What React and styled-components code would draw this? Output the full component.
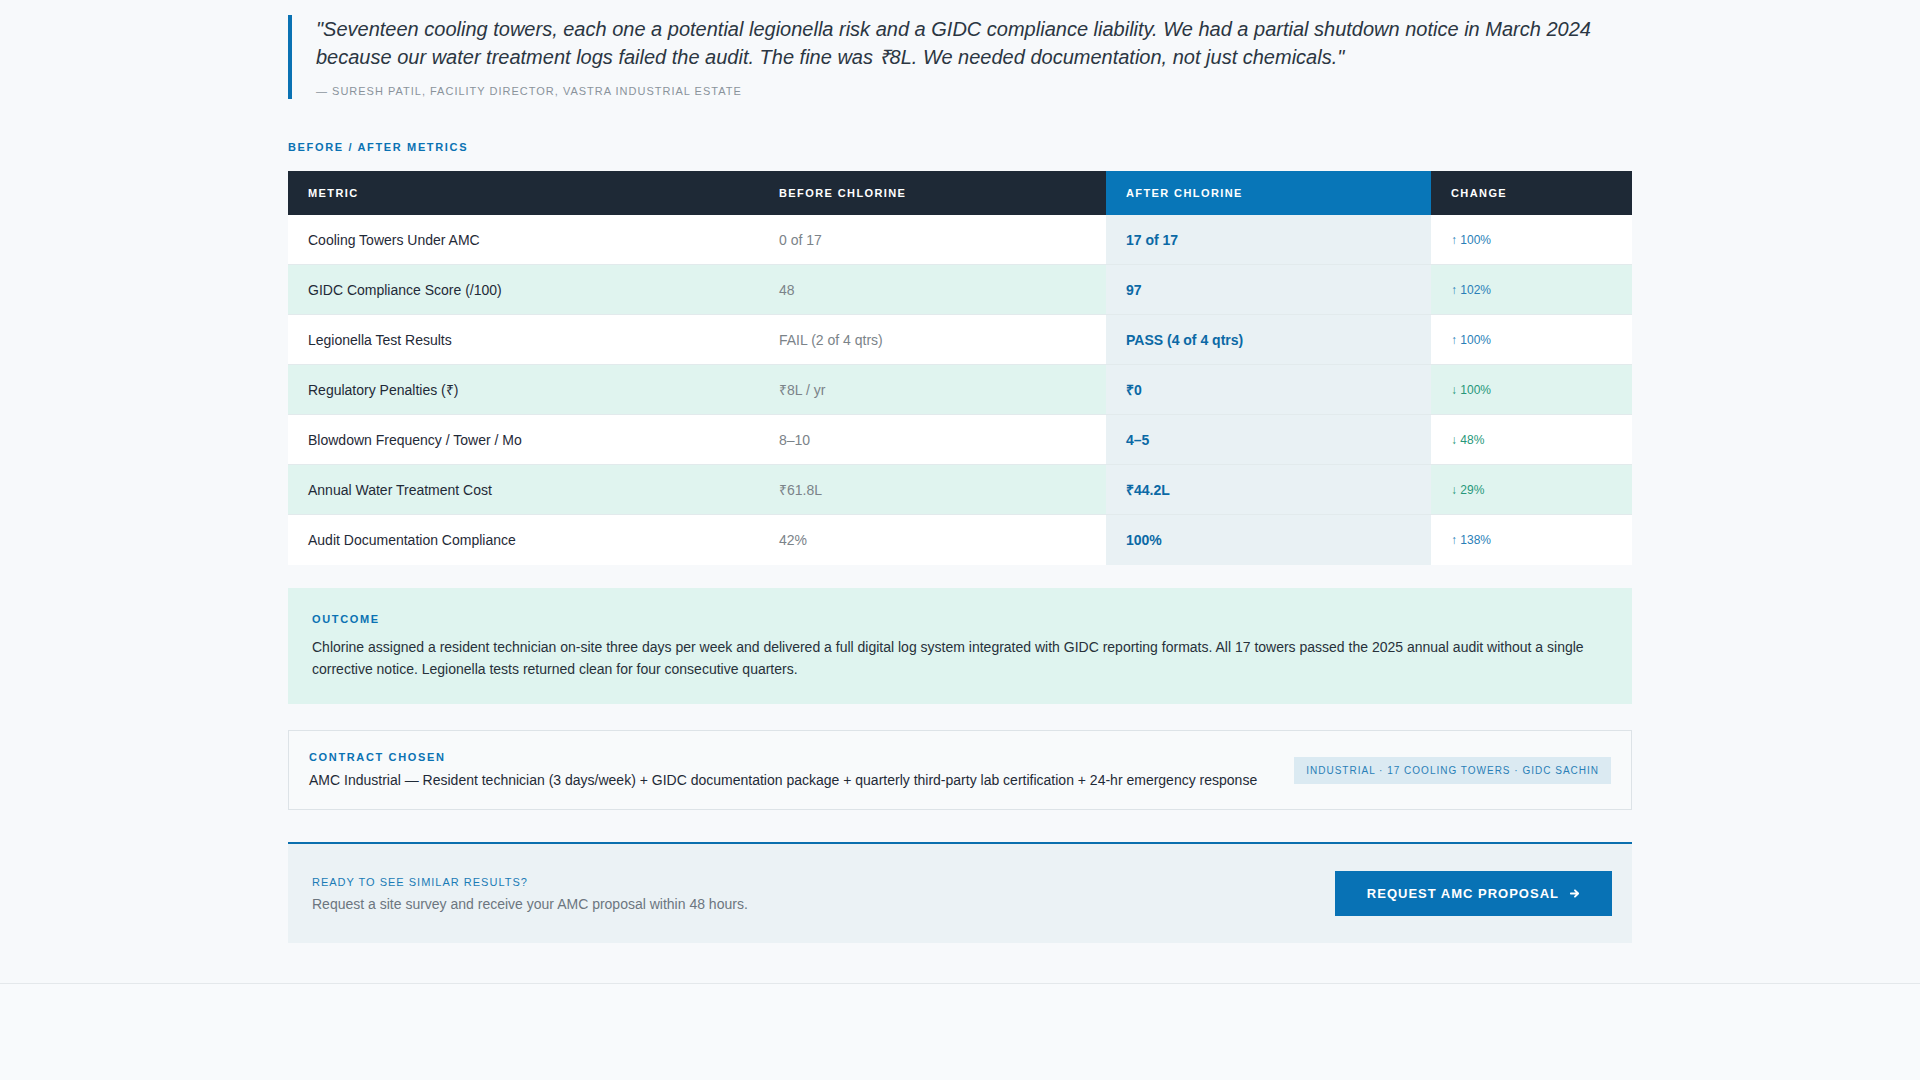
import React from "react";
import styled, { createGlobalStyle } from "styled-components";

const GlobalStyle = createGlobalStyle`
  html, body { margin: 0; padding: 0; }
  body {
    background: #f7f9fb;
    font-family: "Liberation Sans", Arial, sans-serif;
    color: #1f2a37;
  }
  * { box-sizing: border-box; }
`;

const Page = styled.div`
  min-height: 100vh;
  background: #f7f9fb;
  display: flex;
  flex-direction: column;
`;

const Main = styled.main`
  width: 1344px;
  margin: 0 auto;
  padding: 15px 0 40px;
`;

const Quote = styled.blockquote`
  margin: 0;
  border-left: 4px solid #0a72b3;
  padding-left: 24px;
`;

const QuoteText = styled.p`
  margin: 0;
  font-size: 20px;
  line-height: 28px;
  font-style: italic;
  color: #2b3642;
`;

const Attribution = styled.div`
  margin-top: 12px;
  font-size: 11px;
  line-height: 16px;
  letter-spacing: 1px;
  text-transform: uppercase;
  color: #8a939b;
`;

const SectionLabel = styled.div`
  margin: 40px 0 16px;
  font-size: 11px;
  line-height: 16px;
  font-weight: 700;
  letter-spacing: 0.15em;
  text-transform: uppercase;
  color: #0a72b3;
`;

const Table = styled.div`
  display: flex;
  flex-direction: column;
  background: #ffffff;
`;

const cols = "471px 347px 325px 1fr";

const HeadRow = styled.div`
  display: grid;
  grid-template-columns: ${cols};
  height: 44px;
  background: #1e2936;
`;

const HeadCell = styled.div`
  display: flex;
  align-items: center;
  padding: 0 20px;
  font-size: 11px;
  font-weight: 700;
  letter-spacing: 1.4px;
  text-transform: uppercase;
  color: #ffffff;
  background: ${(p) => (p.$highlight ? "#0876b8" : "transparent")};
`;

const Row = styled.div`
  display: grid;
  grid-template-columns: ${cols};
  height: 50px;
  background: ${(p) => (p.$alt ? "#e0f4ef" : "#ffffff")};
  border-bottom: ${(p) => (p.$last ? "none" : "1px solid #e2eaec")};
`;

const Cell = styled.div`
  display: flex;
  align-items: center;
  padding: 0 20px;
  font-size: 14px;
  color: #1f2a37;
`;

const BeforeCell = styled(Cell)`
  color: #7b8389;
`;

const AfterCell = styled(Cell)`
  background: #e9f1f4;
  color: #0b69a5;
  font-weight: 700;
`;

const ChangeCell = styled(Cell)`
  font-size: 12px;
  color: ${(p) => (p.$down ? "#27977a" : "#2a7fb7")};
`;

const Outcome = styled.section`
  margin-top: 23px;
  background: #dff4ef;
  padding: 24px;
`;

const BoxLabel = styled.div`
  font-size: 11px;
  line-height: 14px;
  font-weight: 700;
  letter-spacing: 0.15em;
  text-transform: uppercase;
  color: #0a72b3;
  margin-bottom: ${(p) => p.$gap || 0}px;
`;

const OutcomeText = styled.p`
  margin: 0;
  font-size: 14px;
  line-height: 22px;
  color: #27313a;
`;

const Contract = styled.section`
  margin-top: 26px;
  border: 1px solid #dde3e7;
  background: #f8fafb;
  padding: 19px 20px;
  display: flex;
  align-items: center;
  justify-content: space-between;
  gap: 24px;
`;

const ContractText = styled.div`
  font-size: 14px;
  line-height: 20px;
  color: #1f2a37;
`;

const Badge = styled.span`
  flex-shrink: 0;
  background: #dbeaf2;
  color: #2a7fb7;
  font-size: 10px;
  line-height: 15px;
  letter-spacing: 1px;
  text-transform: uppercase;
  padding: 6px 12px;
`;

const Cta = styled.section`
  margin-top: 32px;
  border-top: 2px solid #0a6fae;
  background: #ebf2f5;
  padding: 27px 20px 27px 24px;
  display: flex;
  align-items: center;
  justify-content: space-between;
`;

const CtaLabel = styled.div`
  font-size: 11px;
  line-height: 16px;
  letter-spacing: 1px;
  text-transform: uppercase;
  color: #1a7bb6;
  margin-bottom: 4px;
`;

const CtaText = styled.div`
  font-size: 14px;
  line-height: 20px;
  color: #6c767f;
`;

const Button = styled.button`
  border: none;
  background: #0872b5;
  color: #ffffff;
  font-family: "Liberation Sans", Arial, sans-serif;
  font-size: 13px;
  line-height: 15px;
  font-weight: 700;
  letter-spacing: 1px;
  text-transform: uppercase;
  padding: 15px 32px;
  display: inline-flex;
  align-items: center;
  gap: 10px;
  cursor: pointer;
`;

const Footer = styled.footer`
  flex: 1;
  border-top: 1px solid #e4e8eb;
  background: #f8fafc;
`;

const rows = [
  ["Cooling Towers Under AMC", "0 of 17", "17 of 17", "↑ 100%", false],
  ["GIDC Compliance Score (/100)", "48", "97", "↑ 102%", false],
  ["Legionella Test Results", "FAIL (2 of 4 qtrs)", "PASS (4 of 4 qtrs)", "↑ 100%", false],
  ["Regulatory Penalties (₹)", "₹8L / yr", "₹0", "↓ 100%", true],
  ["Blowdown Frequency / Tower / Mo", "8–10", "4–5", "↓ 48%", true],
  ["Annual Water Treatment Cost", "₹61.8L", "₹44.2L", "↓ 29%", true],
  ["Audit Documentation Compliance", "42%", "100%", "↑ 138%", false],
];

const Arrow = () => (
  <svg width="11" height="11" viewBox="0 0 12 12" fill="none" stroke="currentColor" strokeWidth="2" strokeLinecap="round" strokeLinejoin="round">
    <path d="M2 6h8M6.5 2.5L10 6l-3.5 3.5" />
  </svg>
);

export default function App() {
  return (
    <Page>
      <GlobalStyle />
      <Main>
        <Quote>
          <QuoteText>
            "Seventeen cooling towers, each one a potential legionella risk and a GIDC compliance liability. We had a partial shutdown notice in March 2024 because our water treatment logs failed the audit. The fine was ₹8L. We needed documentation, not just chemicals."
          </QuoteText>
          <Attribution>— Suresh Patil, Facility Director, Vastra Industrial Estate</Attribution>
        </Quote>

        <SectionLabel>Before / After Metrics</SectionLabel>
        <Table>
          <HeadRow>
            <HeadCell>Metric</HeadCell>
            <HeadCell>Before Chlorine</HeadCell>
            <HeadCell $highlight>After Chlorine</HeadCell>
            <HeadCell>Change</HeadCell>
          </HeadRow>
          {rows.map(([metric, before, after, change, down], i) => (
            <Row key={metric} $alt={i % 2 === 1} $last={i === rows.length - 1}>
              <Cell>{metric}</Cell>
              <BeforeCell>{before}</BeforeCell>
              <AfterCell>{after}</AfterCell>
              <ChangeCell $down={down}>{change}</ChangeCell>
            </Row>
          ))}
        </Table>

        <Outcome>
          <BoxLabel $gap={10}>Outcome</BoxLabel>
          <OutcomeText>
            Chlorine assigned a resident technician on-site three days per week and delivered a full digital log system integrated with GIDC reporting formats. All 17 towers passed the 2025 annual audit without a single corrective notice. Legionella tests returned clean for four consecutive quarters.
          </OutcomeText>
        </Outcome>

        <Contract>
          <div>
            <BoxLabel $gap={6}>Contract Chosen</BoxLabel>
            <ContractText>
              AMC Industrial — Resident technician (3 days/week) + GIDC documentation package + quarterly third-party lab certification + 24-hr emergency response
            </ContractText>
          </div>
          <Badge>Industrial · 17 Cooling Towers · GIDC Sachin</Badge>
        </Contract>

        <Cta>
          <div>
            <CtaLabel>Ready to see similar results?</CtaLabel>
            <CtaText>Request a site survey and receive your AMC proposal within 48 hours.</CtaText>
          </div>
          <Button>
            Request AMC Proposal <Arrow />
          </Button>
        </Cta>
      </Main>
      <Footer />
    </Page>
  );
}
